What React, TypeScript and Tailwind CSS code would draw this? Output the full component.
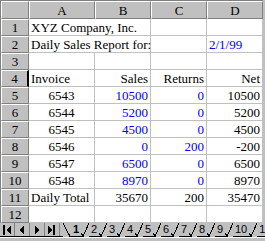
const serif = "[font-family:'Liberation_Serif','Times_New_Roman',serif]";
const sans = "[font-family:'Liberation_Sans',Arial,sans-serif]";

type Cell = { v?: string; align?: "l" | "r" | "c"; blue?: boolean; span?: number };

const rows: Cell[][] = [
  [{ v: "XYZ Company, Inc.", span: 2 }, {}, {}],
  [{ v: "Daily Sales Report for:", span: 2 }, {}, { v: "2/1/99", blue: true }],
  [{}, {}, {}, {}],
  [{ v: "Invoice" }, { v: "Sales", align: "r" }, { v: "Returns", align: "r" }, { v: "Net", align: "r" }],
  [{ v: "6543", align: "c" }, { v: "10500", align: "r", blue: true }, { v: "0", align: "r", blue: true }, { v: "10500", align: "r" }],
  [{ v: "6544", align: "c" }, { v: "5200", align: "r", blue: true }, { v: "0", align: "r", blue: true }, { v: "5200", align: "r" }],
  [{ v: "6545", align: "c" }, { v: "4500", align: "r", blue: true }, { v: "0", align: "r", blue: true }, { v: "4500", align: "r" }],
  [{ v: "6546", align: "c" }, { v: "0", align: "r", blue: true }, { v: "200", align: "r", blue: true }, { v: "-200", align: "r" }],
  [{ v: "6547", align: "c" }, { v: "6500", align: "r", blue: true }, { v: "0", align: "r", blue: true }, { v: "6500", align: "r" }],
  [{ v: "6548", align: "c" }, { v: "8970", align: "r", blue: true }, { v: "0", align: "r", blue: true }, { v: "8970", align: "r" }],
  [{ v: "Daily Total" }, { v: "35670", align: "r" }, { v: "200", align: "r" }, { v: "35470", align: "r" }],
  [{}, {}, {}, {}],
];

const headerCell =
  "bg-[#c0c0c0] border-t border-l border-r border-b border-t-white border-l-white border-r-[#808080] border-b-[#808080] flex items-center justify-center text-black";

function NavButton({ kind }: { kind: "first" | "prev" | "next" | "last" }) {
  return (
    <div className="w-[15px] h-full flex items-center justify-center border-r border-[#808080]">
      <svg width="15" height="13" viewBox="0 0 15 13" shapeRendering="crispEdges">
        {kind === "first" && (
          <>
            <rect x="3" y="2" width="2" height="10" fill="black" />
            <polygon points="12,2 7,7 12,12" fill="black" />
          </>
        )}
        {kind === "prev" && <polygon points="10,2 5,7 10,12" fill="black" />}
        {kind === "next" && <polygon points="5,2 10,7 5,12" fill="black" />}
        {kind === "last" && (
          <>
            <polygon points="3,2 8,7 3,12" fill="black" />
            <rect x="9" y="2" width="2" height="10" fill="black" />
          </>
        )}
      </svg>
    </div>
  );
}

function Sep() {
  return (
    <svg width="8" height="14" viewBox="0 0 8 14" className="shrink-0" shapeRendering="crispEdges">
      <line x1="0" y1="13.5" x2="2" y2="13.5" stroke="black" />
      <line x1="0.5" y1="10.5" x2="2" y2="13.5" stroke="black" />
      <line x1="2" y1="13.5" x2="8" y2="0" stroke="black" />
    </svg>
  );
}

export default function App() {
  const tabs = ["2", "3", "4", "5", "6", "7", "8", "9", "10", "11"];
  return (
    <div className={`w-[265px] h-[241px] bg-[#c0c0c0] overflow-hidden flex flex-col ${serif} text-[13px] leading-[15px]`}>
      <div className="border-t border-l border-[#808080] grid grid-cols-[28px_66px_56px_56px_56px] grid-rows-[18px_repeat(12,17px)] w-[263px]">
        <div className={headerCell}></div>
        {["A", "B", "C", "D"].map((c) => (
          <div key={c} className={headerCell}>
            {c}
          </div>
        ))}
        {rows.map((row, ri) => (
          <div key={ri} className="contents">
            <div className={`${headerCell} ${ri === 3 ? "border-r-2 border-r-black" : ""}`}>{ri + 1}</div>
            {row.map((cell, ci) => {
              const justify =
                cell.align === "r" ? "justify-end" : cell.align === "c" ? "justify-center" : "justify-start";
              return (
                <div
                  key={ci}
                  className={`bg-white border-r border-b border-[#c0c0c0] flex items-end px-[2px] whitespace-nowrap ${justify} ${
                    cell.blue ? "text-[#0000ff]" : "text-black"
                  } ${cell.span === 2 ? "col-span-2" : ""}`}
                >
                  {cell.v}
                </div>
              );
            })}
          </div>
        ))}
      </div>
      <div className={`flex h-[14px] ${sans} text-[11px] leading-[13px] text-black`}>
        <div className="flex h-[14px] border-b border-black shrink-0">
          <NavButton kind="first" />
          <NavButton kind="prev" />
          <NavButton kind="next" />
          <NavButton kind="last" />
          <div className="w-[3px]" />
        </div>
        <svg width="8" height="14" viewBox="0 0 8 14" className="shrink-0" shapeRendering="crispEdges">
          <line x1="0" y1="0" x2="7" y2="13.5" stroke="black" />
          <line x1="7" y1="13.5" x2="8" y2="13.5" stroke="black" />
        </svg>
        <div className="w-[10px] shrink-0 h-[14px] border-b border-black flex items-center justify-center font-bold">1</div>
        {tabs.map((t) => (
          <div key={t} className="flex shrink-0">
            <Sep />
            <div
              className={`${t.length > 1 ? "w-[16px]" : "w-[10px]"} h-[14px] border-b border-black flex items-center justify-center`}
            >
              {t}
            </div>
          </div>
        ))}
      </div>
      <div className="flex-1 border-t border-white bg-[#c0c0c0]" />
    </div>
  );
}
